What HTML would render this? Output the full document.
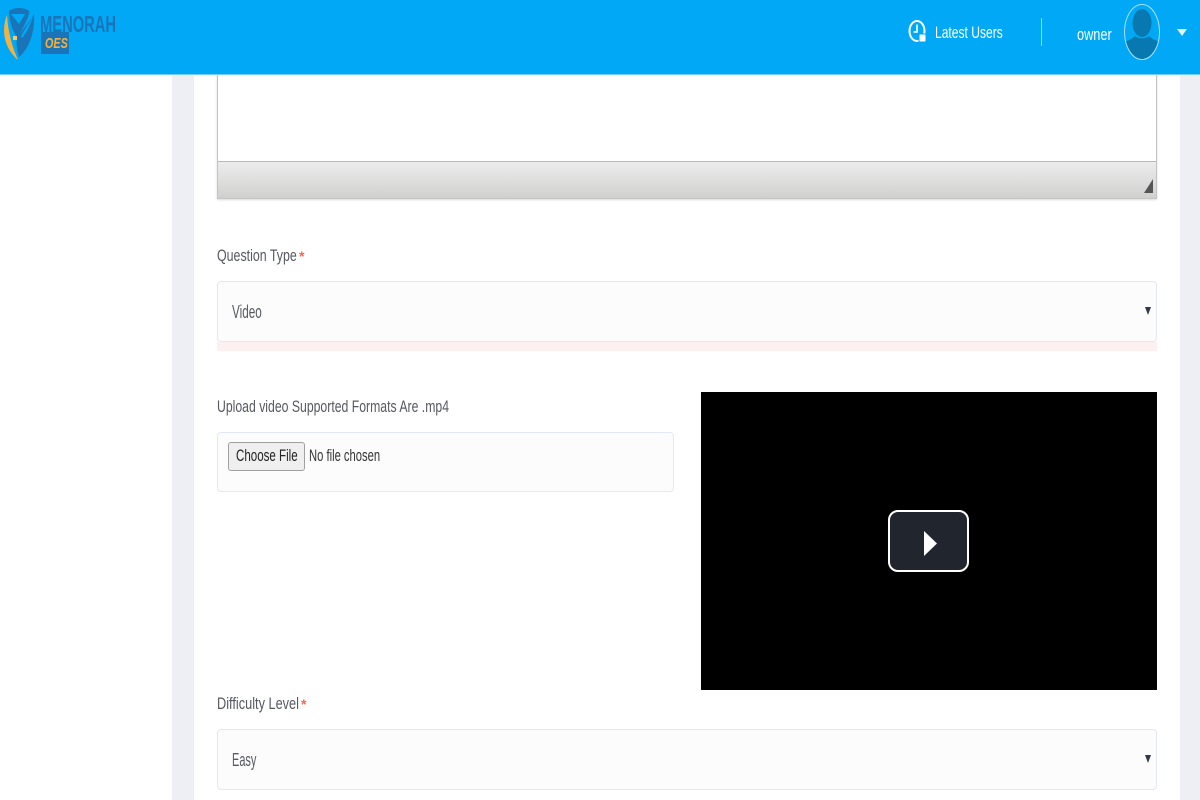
<!DOCTYPE html>
<html>
<head>
<meta charset="utf-8">
<style>
html,body{margin:0;padding:0;width:1200px;height:800px;overflow:hidden;background:#fff;font-family:"Liberation Sans",sans-serif}
.a{position:absolute;box-sizing:border-box}
.t{position:absolute;white-space:nowrap;transform-origin:0 50%;line-height:20px;color:#575962;font-size:17px;filter:blur(.25px)}
.sel{position:absolute;box-sizing:border-box;left:217px;width:940px;height:61px;background:#fcfcfc;border:1px solid #e3e8f6;border-radius:4px}
.star{position:absolute;color:#f4664c;font-size:14px;font-weight:bold;line-height:20px}
.arrow{position:absolute;width:0;height:0;border-left:3.5px solid transparent;border-right:3.5px solid transparent;border-top:8px solid #2f3a4a}
</style>
</head>
<body>
<div class="a" style="left:172px;top:0;width:22px;height:800px;background:#eeeff5"></div>
<div class="a" style="left:1180px;top:0;width:20px;height:800px;background:#eeeff5"></div>

<!-- editor -->
<div class="a" style="left:217px;top:70px;width:940px;height:129px;border:1px solid #c4c4c4;border-top:none;background:#fff;box-shadow:0 1px 2px rgba(0,0,0,.15)">
  <div class="a" style="left:0;right:0;top:91px;height:37px;border-top:1px solid #b8b8b8;background:linear-gradient(#ececec,#d0d1cf)"></div>
</div>
<svg class="a" style="left:1143px;top:179px" width="11" height="15"><path d="M10 0V14H1Z" fill="#555"/></svg>

<!-- Question type -->
<div class="t" style="left:217px;top:246px;transform:scaleX(.73)">Question Type</div>
<div class="star" style="left:299px;top:246px">*</div>
<div class="sel" style="top:281px"></div>
<div class="t" style="left:232px;top:302px;font-size:18px;transform:scaleX(.65)">Video</div>
<div class="arrow" style="left:1145px;top:307px"></div>
<div class="a" style="left:217px;top:342px;width:940px;height:9px;background:#fdf0f0"></div>

<!-- Upload -->
<div class="t" style="left:217px;top:397px;transform:scaleX(.72)">Upload video Supported Formats Are .mp4</div>
<div class="a" style="left:217px;top:432px;width:457px;height:60px;background:#fcfcfc;border:1px solid #e3e8f6;border-radius:4px"></div>
<div class="a" style="left:228px;top:442px;width:77px;height:29px;background:#efefef;border:1px solid #a0a0a0;border-radius:3px"></div>
<div class="t" style="left:236px;top:446px;color:#222;transform:scaleX(.68)">Choose File</div>
<div class="t" style="left:309px;top:446px;color:#333;transform:scaleX(.66)">No file chosen</div>

<!-- Video -->
<div class="a" style="left:701px;top:392px;width:456px;height:298px;background:#000"></div>
<div class="a" style="left:888px;top:510px;width:81px;height:62px;background:#20252e;border:2px solid #fff;border-radius:10px"></div>
<svg class="a" style="left:923px;top:531px" width="16" height="25"><path d="M1 0L14 12.5L1 25Z" fill="#fff"/></svg>

<!-- Difficulty -->
<div class="t" style="left:217px;top:694px;transform:scaleX(.75)">Difficulty Level</div>
<div class="star" style="left:301px;top:694px">*</div>
<div class="sel" style="top:729px"></div>
<div class="t" style="left:232px;top:750px;font-size:18px;transform:scaleX(.61)">Easy</div>
<div class="arrow" style="left:1145px;top:755px"></div>

<!-- Header -->
<div class="a" style="left:0;top:0;width:1200px;height:75px;background:#00a8f5;border-bottom:1px solid #6fcdf7"></div>
<svg class="a" style="left:0;top:0;filter:blur(.35px)" width="40" height="62" viewBox="0 0 40 62">
  <path d="M7 15C1 30 4 48 18 60C12 46 8 32 7 15Z" fill="#f5b042"/>
  <path d="M9 11C14 7 24 7 29 11C30 13 27 20 24 26C21 31 19 35 17 37C12 30 9 20 9 11Z" fill="#1a75b8"/>
  <path d="M11 14H25L19 24Z" fill="#00a8f5"/>
  <path d="M17 37C20 33 28 24 34 14C35 30 30 48 19 57C17 50 16 44 17 37Z" fill="#1a75b8"/>
  <path d="M33 15C29 24 24 30 21 36L22 38C27 32 31 24 33 15Z" fill="#00a8f5"/>
  <rect x="13" y="36" width="4" height="4" fill="#f5c76a"/>
</svg>
<div class="t" style="left:40px;top:12px;font-size:23px;line-height:24px;font-weight:bold;color:#1a75b8;transform:scaleX(.64)">MENORAH</div>
<div class="a" style="left:41px;top:32px;width:28px;height:22px;background:#1a75b8"></div>
<div class="t" style="left:45px;top:35px;font-size:15px;line-height:17px;font-weight:bold;font-style:italic;color:#f5b042;transform:scaleX(.72)">OES</div>

<svg class="a" style="left:907px;top:19px" width="22" height="26" viewBox="0 0 22 26">
  <ellipse cx="10" cy="12" rx="7.5" ry="10" fill="none" stroke="#fff" stroke-width="2"/>
  <path d="M10 5.5V13H6.5" fill="none" stroke="#fff" stroke-width="1.6"/>
  <rect x="12" y="15" width="7" height="8" rx="1" fill="#fff" stroke="#00a8f5"/>
</svg>
<div class="t" style="left:935px;top:23px;color:#fff;transform:scaleX(.71)">Latest Users</div>
<div class="a" style="left:1041px;top:18px;width:1px;height:28px;background:#8fd9fa"></div>
<div class="t" style="left:1077px;top:25px;color:#fff;transform:scaleX(.75)">owner</div>
<svg class="a" style="left:1123px;top:3px" width="38" height="58" viewBox="0 0 38 58">
  <defs><clipPath id="c"><ellipse cx="19" cy="29" rx="17" ry="27"/></clipPath></defs>
  <g clip-path="url(#c)">
    <ellipse cx="19" cy="20" rx="9.5" ry="14" fill="#0778b0"/>
    <path d="M0 60V40C4 38 9 36 12 33C15 36 23 36 26 33C29 36 34 38 38 40V60Z" fill="#0778b0"/>
  </g>
  <ellipse cx="19" cy="29" rx="17.5" ry="27.5" fill="none" stroke="#a5e0fb" stroke-width="1"/>
</svg>
<div class="a" style="left:1177px;top:29px;width:0;height:0;border-left:5px solid transparent;border-right:5px solid transparent;border-top:7px solid #dff4fd"></div>
</body>
</html>
